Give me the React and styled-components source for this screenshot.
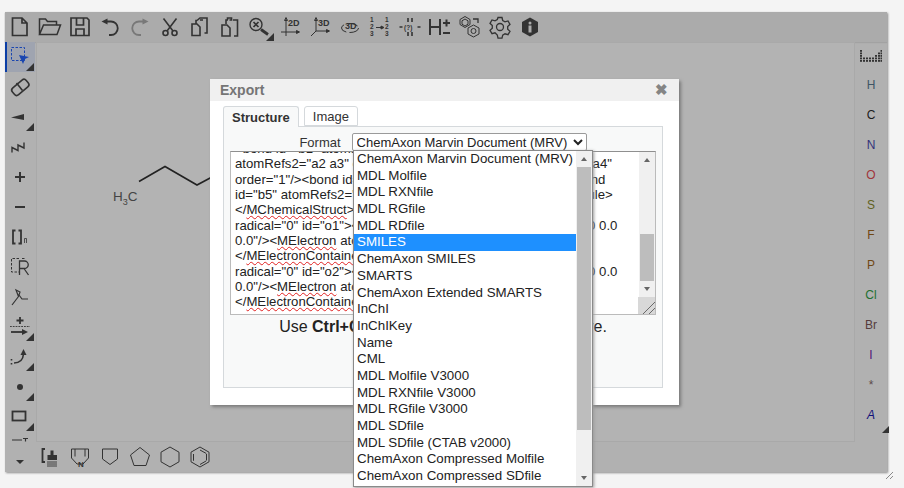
import React from 'react';
import styled, { createGlobalStyle } from 'styled-components';

const GlobalStyle = createGlobalStyle`
  html, body {
    margin: 0;
    background: #f4f4f4;
    font-family: "Liberation Sans", Arial, sans-serif;
  }
  * { box-sizing: border-box; }
`;

const Page = styled.div`
  width: 904px;
  height: 488px;
  padding: 12px 0 0 5px;
  overflow: hidden;
`;

const Editor = styled.div`
  position: relative;
  width: 882px;
  height: 460px;
  display: grid;
  grid-template-columns: 31px 1fr 32px;
  grid-template-rows: 30px 1fr 30px;
  background: #b1b1b1;
  box-shadow: 1px 1px 2px #8c8c8c;
`;

const TopBar = styled.div`
  grid-column: 1 / 4;
  display: flex;
  background: #ababab;
  box-shadow: 0 1px 1px #a2a2a2;
`;

const LeftBar = styled.div`
  display: flex;
  flex-direction: column;
  overflow: hidden;
`;

const Canvas = styled.div`
  position: relative;
  background: #b3b3b3;
  border: 1px solid #a9a9a9;
`;

const RightBar = styled.div`
  display: flex;
  flex-direction: column;
  align-items: center;
`;

const BottomBar = styled.div`
  grid-column: 1 / 4;
  display: flex;
`;

const Tool = styled.div`
  position: relative;
  flex: 0 0 30px;
  width: 30px;
  height: 30px;
  display: flex;
  align-items: center;
  justify-content: center;
  color: ${p => (p.$dim ? '#787878' : '#333')};
  background: ${p => (p.$active ? '#9fa4b0' : 'transparent')};
  box-shadow: ${p => (p.$active ? 'inset 2px 0 0 #0b3ea6' : 'none')};
  ${p => p.$corner && `
    &::after {
      content: '';
      position: absolute;
      right: 1px;
      bottom: 1px;
      border-style: solid;
      border-width: 0 0 8px 8px;
      border-color: transparent transparent #333 transparent;
    }
  `}
`;

const Atom = styled.div`
  position: relative;
  flex: 0 0 ${p => p.$height || 30}px;
  width: 30px;
  display: flex;
  align-items: center;
  justify-content: center;
  font-size: 12px;
  color: ${p => p.$color};
  font-style: ${p => (p.$italic ? 'italic' : 'normal')};
  ${p => p.$corner && `
    &::after {
      content: '';
      position: absolute;
      right: -3px;
      bottom: -3px;
      border-style: solid;
      border-width: 0 0 7px 7px;
      border-color: transparent transparent #333 transparent;
    }
  `}
`;

const ResizeGrip = styled.svg`
  position: absolute;
  right: -7px;
  bottom: -8px;
`;

const Label = styled.span`
  position: absolute;
  left: 76px;
  top: 146px;
  font-size: 13.5px;
  color: #444;
  sub { font-size: 9px; line-height: 0; }
`;

const Bonds = styled.svg`
  position: absolute;
  left: 0;
  top: 0;
`;

const Modal = styled.div`
  position: absolute;
  left: 205px;
  top: 67px;
  width: 469px;
  height: 326px;
  background: #fff;
  box-shadow: 2px 2px 3px #7a7a7a;
  display: flex;
  flex-direction: column;
  padding-bottom: 17px;
`;

const ModalHeader = styled.div`
  height: 22px;
  flex: none;
  background: #f0f0f0;
  display: flex;
  align-items: center;
  justify-content: space-between;
  padding: 0 11px 0 10px;
  font-size: 14px;
  font-weight: bold;
  color: #757575;
`;

const Close = styled.span`
  font-size: 15px;
  color: #858585;
`;

const Tabs = styled.div`
  flex: none;
  display: flex;
  gap: 5px;
  margin: 5px 0 0 13px;
  height: 20px;
`;

const Tab = styled.div`
  height: ${p => (p.$active ? '21px' : '20px')};
  position: relative;
  z-index: 1;
  padding: 0 8px;
  display: flex;
  align-items: center;
  font-size: 13px;
  color: #333;
  font-weight: ${p => (p.$active ? 'bold' : 'normal')};
  background: ${p => (p.$active ? '#f8f9f9' : '#fff')};
  border: 1px solid #d5d9dc;
  border-bottom: ${p => (p.$active ? 'none' : '1px solid #d5d9dc')};
  border-radius: 3px 3px 0 0;
`;

const TabPanel = styled.div`
  flex: 1;
  margin: 0 16px 0 13px;
  background: #f8f9f9;
  border: 1px solid #d5d9dc;
  display: flex;
  flex-direction: column;
  padding: 6px 6px 0;
`;

const FormatRow = styled.div`
  position: relative;
  z-index: 2;
  flex: none;
  display: flex;
  justify-content: center;
  align-items: center;
  gap: 11px;
  height: 18px;
  font-size: 13px;
  color: #333;
`;

const FormatSelect = styled.select`
  width: 235px;
  height: 18px;
  padding: 0;
  font: 13px "Liberation Sans", Arial, sans-serif;
  color: #222;
  background: #fff;
  border: 1px solid #9a9a9a;
  border-radius: 2px;
`;

const DropList = styled.div`
  position: absolute;
  left: 123px;
  top: 17px;
  width: 240px;
  height: 337px;
  background: #fff;
  border: 1px solid #8a8a8a;
  box-shadow: 1px 1px 3px #9a9a9a;
  display: flex;
`;

const Options = styled.ul`
  flex: 1;
  list-style: none;
  margin: 0;
  padding: 0;
  overflow: hidden;
`;

const Option = styled.li`
  height: 16.7px;
  padding: 0 3px;
  font-size: 13.33px;
  line-height: 16.7px;
  white-space: nowrap;
  color: ${p => (p.$selected ? '#fff' : '#222')};
  background: ${p => (p.$selected ? '#1e90ff' : 'transparent')};
`;

const ScrollBar = styled.div`
  flex: 0 0 16px;
  display: flex;
  flex-direction: column;
  align-items: center;
  background: #f0f0f0;
  margin-bottom: ${p => p.$inset || 0}px;
`;

const ScrollButton = styled.div`
  flex: 0 0 ${p => p.$size}px;
  width: 100%;
  display: flex;
  align-items: center;
  justify-content: center;
  &::before {
    content: '';
    border-style: solid;
    border-width: ${p => (p.$down ? '4px 3.5px 0' : '0 3.5px 4px')};
    border-color: ${p => (p.$down ? '#666 transparent transparent' : 'transparent transparent #666')};
  }
`;

const ScrollThumb = styled.div`
  flex: 0 0 ${p => p.$size}px;
  width: 14px;
  background: #bdbdbd;
`;

const ScrollSpace = styled.div`
  flex: 1 1 ${p => p.$size}px;
`;

const TextBox = styled.div`
  position: relative;
  flex: none;
  height: 164px;
  background: #fff;
  border: 1px solid #bbb;
  border-top-color: #8f8f8f;
  display: flex;
`;

const TextLines = styled.div`
  flex: 1;
  overflow: hidden;
  padding: 0 0 0 4px;
  font-size: 13.2px;
  line-height: 15.33px;
  color: #222;
  white-space: pre;
`;

const TextLine = styled.div`
  height: 15.33px;
  &:first-child { margin-top: -11px; }
`;

const Squiggle = styled.span`
  text-decoration: underline wavy #e02020 1px;
  text-underline-offset: 1px;
`;

const ResizeCorner = styled.div`
  position: absolute;
  right: 0;
  bottom: 0;
  width: 17px;
  height: 17px;
  background: linear-gradient(135deg, #d8d8d8 62%, #6a6a6a 62%, #6a6a6a 67%, #d8d8d8 67%, #d8d8d8 80%, #6a6a6a 80%, #6a6a6a 85%, #d8d8d8 85%);
`;

const CopyHint = styled.div`
  flex: none;
  margin-top: 3px;
  text-align: center;
  font-size: 16px;
  color: #222;
  white-space: nowrap;
`;

const ic = { width: 24, height: 24, viewBox: '0 0 24 24', fill: 'none', stroke: 'currentColor' };

const NewIcon = () => <svg {...ic} strokeWidth="1.7"><path d="M4.5 3h9.5l5 5v12.5h-14.5z M14 3v5h5" /></svg>;
const OpenIcon = () => <svg {...ic} strokeWidth="1.5"><path d="M1.5 19.5V4h6l2 2.5h9V10 M1.5 19.5l4-9.5h17l-3.5 9.5z" /></svg>;
const SaveIcon = () => <svg {...ic} strokeWidth="1.7"><path d="M3 3h16l2 2v15.500H3z M8.500 3.500v6.500h7v-6.500 M8 20v-6h8v6" /></svg>;
const UndoIcon = () => <svg {...ic} strokeWidth="1.8"><path d="M9 6.500h4a6.500 6.500 0 0 1 0 13.500h-2" /><path d="M3.500 6.500l6-3v6z" fill="currentColor" stroke="none" /></svg>;
const RedoIcon = () => <svg {...ic} strokeWidth="1.8"><path d="M15 6.500h-4a6.500 6.500 0 0 0 0 13.500h2" /><path d="M20.500 6.500l-6-3v6z" fill="currentColor" stroke="none" /></svg>;
const CutIcon = () => <svg {...ic} strokeWidth="1.6"><circle cx="7.500" cy="18" r="2.500" /><circle cx="16.500" cy="18" r="2.500" /><path d="M9 16L18.500 3.500 M15 16L5.500 3.500" /></svg>;
const CopyIcon = () => <svg {...ic} strokeWidth="1.6"><path d="M4 9h5l3 3v8.500H4z M8 9V5.500h1 M12 5h3 M15.500 3H19v15h-2.500 M9 5.500L12 3h3.500" /></svg>;
const PasteIcon = () => <svg {...ic} strokeWidth="1.6"><path d="M4 10h5l3 3v8H4z M8 9V5h2 M9.500 5V3h4v2h-2 M15 5h4.500v16H16" /></svg>;
const CleanIcon = () => (
  <svg width="26" height="26" viewBox="0 0 26 26" fill="none" stroke="currentColor" strokeWidth="1.4">
    <circle cx="9" cy="10.500" r="6" />
    <path d="M6.500 8l5 5 M11.500 8l-5 5" strokeWidth="1.700" />
    <path d="M14 15.500l7 5" strokeWidth="2.800" />
  </svg>
);

const AxisText = styled.text`
  font: bold 9px "Liberation Sans", Arial, sans-serif;
  fill: currentColor;
  stroke: none;
`;

const SmallNum = styled.text`
  font: bold 6.5px "Liberation Sans", Arial, sans-serif;
  fill: currentColor;
  stroke: none;
`;

const Clean2dIcon = () => (
  <svg {...ic} strokeWidth="1"><path d="M8 4v17 M3 17h18 M8 2.500l-1.500 3h3z" /><path d="M21.500 17l-3-1.500v3z" fill="currentColor" /><AxisText x="10" y="11">2D</AxisText></svg>
);
const Clean3dIcon = () => (
  <svg {...ic} strokeWidth="1"><path d="M8 4v12 M8 16h13 M8 16l-5 5 M8 2.500l-1.500 3h3z" /><path d="M21.500 16l-3-1.500v3z" fill="currentColor" /><AxisText x="10" y="11">3D</AxisText></svg>
);
const Rotate3dIcon = () => (
  <svg {...ic} strokeWidth="1"><ellipse cx="12" cy="13" rx="8.500" ry="4.500" strokeDasharray="11 3" /><AxisText x="7" y="14">3D</AxisText></svg>
);
const NumberIcon = () => (
  <svg {...ic} strokeWidth="1">
    <SmallNum x="2" y="7">1</SmallNum><SmallNum x="2" y="14">2</SmallNum><SmallNum x="2" y="21">3</SmallNum>
    <SmallNum x="17" y="7">1</SmallNum><SmallNum x="17" y="14">2</SmallNum><SmallNum x="17" y="21">3</SmallNum>
    <path d="M8 12.500h7" /><path d="M16 12.500l-3-1.500v3z" fill="currentColor" />
  </svg>
);
const QueryIcon = () => (
  <svg {...ic} strokeWidth="1.600">
    <path d="M10 3v4 M14 3v4 M10 17v4 M14 17v4 M1.500 12h3 M19.500 12h3" />
    <SmallNum x="6" y="14.500">(?)</SmallNum>
  </svg>
);
const HydrogenIcon = () => (
  <svg {...ic} strokeWidth="2">
    <path d="M2 4v16 M12 4v16 M2 12h10" />
    <path d="M15 8h7 M18.500 4.500v7 M15 18h7" />
  </svg>
);
const RingsIcon = () => (
  <svg {...ic} strokeWidth="1">
    <path d="M7 1.500l5 3v5l-5 3-5-3v-5z M7 4l3 1.800v3.400l-3 1.800-3-1.800V5.800z" />
    <path d="M15.500 10l5.500 3v6l-5.500 3-5.500-3v-6z" />
    <circle cx="15.500" cy="16" r="2.500" />
    <path d="M15 4h5v4" strokeWidth="1.300" />
  </svg>
);
const GearIcon = () => (
  <svg {...ic} strokeWidth="1.300">
    <circle cx="12" cy="12" r="3.500" />
    <path d="M10 2.500h4l.7 3 2.300 1.300 3-.9 2 3.400-2.300 2.200v2.600l2.300 2.200-2 3.400-3-.9-2.300 1.300-.7 3h-4l-.7-3L7 17.800l-3 .9-2-3.400 2.300-2.200v-2.600L2 8.300l2-3.400 3 .9 2.300-1.300z" />
  </svg>
);
const InfoIcon = () => (
  <svg {...ic} stroke="none">
    <path d="M12 2.500l8 4.500v10l-8 4.500-8-4.500V7z" fill="currentColor" />
    <circle cx="12" cy="8" r="1.500" fill="#ababab" />
    <path d="M10.500 10.500h3v7h-3z" fill="#ababab" />
  </svg>
);

const SelectIcon = () => (
  <svg {...ic} strokeWidth="1">
    <rect x="3.500" y="2.500" width="13" height="13" stroke="#1a46b0" strokeDasharray="2.500 1.500" />
    <path d="M11 10l10 2-4 2-2 5z" fill="#1a46b0" stroke="none" />
  </svg>
);
const EraserIcon = () => (
  <svg {...ic} strokeWidth="1.600">
    <rect x="3" y="8" width="18" height="9" rx="3" transform="rotate(-40 12 12)" />
    <path d="M8.500 8l6 7.500" />
  </svg>
);
const WedgeIcon = () => <svg {...ic} stroke="none"><path d="M3 12.500l13-3.500v6z" fill="currentColor" /></svg>;
const ChainIcon = () => <svg {...ic} strokeWidth="1.400"><path d="M4 17.500V12.500l6 3V10l6 3V7.500" /></svg>;
const PlusIcon = () => <svg {...ic} strokeWidth="2"><path d="M12 7v10 M7 12h10" /></svg>;
const MinusIcon = () => <svg {...ic} strokeWidth="2"><path d="M7 12h10" /></svg>;
const BracketIcon = () => (
  <svg {...ic} strokeWidth="1.800">
    <path d="M7.500 5.500H5v13h2.500 M10.500 5.500H13v13h-2.500" />
    <path d="M16.500 18v-4.500h2V18" strokeWidth="0.800" />
  </svg>
);
const RgroupIcon = () => (
  <svg {...ic} strokeWidth="1">
    <path d="M11 3.500H3.500V17H11 M14 3.500h3.500" strokeDasharray="2.500 1.500" />
    <path d="M11.500 20V6h5a3.500 3.500 0 0 1 0 7.500h-5 M16 13.500l4.500 6.500" strokeWidth="1.300" />
  </svg>
);
const SgroupIcon = () => (
  <svg {...ic} strokeWidth="1.200"><path d="M4 20L10.500 11.500 8 5l2 1 2 1-1 3 3 4h6" /></svg>
);
const ReactionIcon = () => (
  <svg {...ic} strokeWidth="1.800">
    <path d="M12 2v7 M8.500 5.500h7" />
    <path d="M2 11.500h20" strokeWidth="0.900" strokeDasharray="1.800 1" />
    <path d="M3 17h13" /><path d="M20 17l-6-3v6z" fill="currentColor" stroke="none" />
  </svg>
);
const MechanismIcon = () => (
  <svg {...ic} strokeWidth="1.600">
    <path d="M6 18c6 0 9-3 9.500-9" />
    <path d="M15.500 4l-3 6h6z" fill="currentColor" stroke="none" />
    <path d="M3.500 14v1.500 M3.500 18v1.500" />
  </svg>
);
const DotIcon = () => <svg {...ic} stroke="none"><circle cx="12" cy="12" r="3" fill="currentColor" /></svg>;
const RectIcon = () => <svg {...ic} strokeWidth="1.800"><rect x="4.500" y="6.500" width="13" height="9" /></svg>;
const TextLineIcon = () => <svg {...ic} strokeWidth="1.200"><path d="M4 5h10 M15 3.500h5 M17.500 3.500v3" /></svg>;

const CaretIcon = () => <svg {...ic} stroke="none"><path d="M8 15h8l-4 4z" fill="currentColor" /></svg>;
const TemplateIcon = () => (
  <svg {...ic} strokeWidth="1.600">
    <path d="M7 4H4.500v13H7" strokeWidth="1.800" />
    <path d="M9.500 15v-5h3V5.500h3V10H19v5z" fill="currentColor" stroke="none" />
    <path d="M9 17h10 M9 19h10 M9 21h10" strokeWidth="0.900" />
  </svg>
);
const NRingIcon = () => (
  <svg {...ic} strokeWidth="1">
    <path d="M3.500 4h17v9L15 19H9l-5.500-6z M7 4v7.500 M17 4v7.500" />
    <SmallNum x="10" y="22" style={{ fontSize: 8 }}>N</SmallNum>
  </svg>
);
const SquareRingIcon = () => <svg {...ic} strokeWidth="1"><path d="M4.500 4h15v10L12 19.500 4.500 14z" /></svg>;
const PentagonIcon = () => <svg {...ic} strokeWidth="1"><path d="M12 2.500L21.500 10 18 20.500H6L2.500 10z" /></svg>;
const HexagonIcon = () => <svg {...ic} strokeWidth="1"><path d="M12 2l9 5.200v9.600L12 22l-9-5.200V7.200z" /></svg>;
const BenzeneIcon = () => (
  <svg {...ic} strokeWidth="1">
    <path d="M12 2l9 5.200v9.600L12 22l-9-5.200V7.200z" />
    <path d="M12 5l6.300 3.500 M18.500 9v6.500 M18 16l-6 3.500 M6 16l-.5-.5V9" />
  </svg>
);

const periodicColumns = [
  [0, 5], [3, 2], [6, 2], [9, 2], [12, 2], [15, 3], [18, 4], [20.500, 5],
];

const PeriodicIcon = () => (
  <svg width="22" height="12" viewBox="0 0 22 12" fill="#333">
    {periodicColumns.flatMap(([x, count]) =>
      Array.from({ length: count }, (_, i) => (
        <rect key={`${x}-${i}`} x={x} y={10 - i * 2.500} width="2" height="1.800" />
      ))
    )}
  </svg>
);

const topTools = [
  { Icon: NewIcon }, { Icon: OpenIcon }, { Icon: SaveIcon }, { Icon: UndoIcon },
  { Icon: RedoIcon, dim: true }, { Icon: CutIcon }, { Icon: CopyIcon }, { Icon: PasteIcon },
  { Icon: CleanIcon, corner: true }, { Icon: Clean2dIcon }, { Icon: Clean3dIcon }, { Icon: Rotate3dIcon },
  { Icon: NumberIcon }, { Icon: QueryIcon }, { Icon: HydrogenIcon }, { Icon: RingsIcon },
  { Icon: GearIcon }, { Icon: InfoIcon },
];

const leftTools = [
  { Icon: SelectIcon, active: true, corner: true }, { Icon: EraserIcon },
  { Icon: WedgeIcon, corner: true }, { Icon: ChainIcon }, { Icon: PlusIcon }, { Icon: MinusIcon },
  { Icon: BracketIcon }, { Icon: RgroupIcon }, { Icon: SgroupIcon },
  { Icon: ReactionIcon, corner: true }, { Icon: MechanismIcon, corner: true },
  { Icon: DotIcon, corner: true }, { Icon: RectIcon, corner: true }, { Icon: TextLineIcon },
];

const bottomTools = [CaretIcon, TemplateIcon, NRingIcon, SquareRingIcon, PentagonIcon, HexagonIcon, BenzeneIcon];

const atoms = [
  ['H', '#3f5566'], ['C', '#1c1c1c'], ['N', '#33337a'], ['O', '#a0343a'], ['S', '#62621e'],
  ['F', '#704814'], ['P', '#704814'], ['Cl', '#1e7030'], ['Br', '#553c3c'], ['I', '#50107a'], ['*', '#5c4a4a'],
];

const formats = [
  'ChemAxon Marvin Document (MRV)', 'MDL Molfile', 'MDL RXNfile', 'MDL RGfile', 'MDL RDfile', 'SMILES',
  'ChemAxon SMILES', 'SMARTS', 'ChemAxon Extended SMARTS', 'InChI', 'InChIKey', 'Name', 'CML',
  'MDL Molfile V3000', 'MDL RXNfile V3000', 'MDL RGfile V3000', 'MDL SDfile', 'MDL SDfile (CTAB v2000)',
  'ChemAxon Compressed Molfile', 'ChemAxon Compressed SDfile',
];

const Scroll = ({ before, thumb, after, inset }) => (
  <ScrollBar $inset={inset}>
    <ScrollButton $size={16} />
    <ScrollSpace $size={before} />
    <ScrollThumb $size={thumb} />
    <ScrollSpace $size={after} />
    <ScrollButton $size={16} $down />
  </ScrollBar>
);

const App = () => (
  <Page>
    <GlobalStyle />
    <Editor>
      <TopBar>
        {topTools.map(({ Icon, dim, corner }, i) => (
          <Tool key={i} $dim={dim} $corner={corner}><Icon /></Tool>
        ))}
      </TopBar>
      <LeftBar>
        {leftTools.map(({ Icon, active, corner }, i) => (
          <Tool key={i} $active={active} $corner={corner}><Icon /></Tool>
        ))}
      </LeftBar>
      <Canvas>
        <Bonds width="180" height="180" fill="none" stroke="#222" strokeWidth="1.600">
          <path d="M102 138.500L128 123.500 160 142 175 134" />
        </Bonds>
        <Label>H<sub>3</sub>C</Label>
      </Canvas>
      <RightBar>
        <Atom $height={28}><PeriodicIcon /></Atom>
        {atoms.map(([name, color]) => (
          <Atom key={name} $color={color}>{name}</Atom>
        ))}
        <Atom $color="#10107a" $italic $corner>A</Atom>
      </RightBar>
      <BottomBar>
        {bottomTools.map((Icon, i) => <Tool key={i}><Icon /></Tool>)}
      </BottomBar>
      <ResizeGrip width="9" height="9" viewBox="0 0 9 9" stroke="#8a8a8a">
        <path d="M1 8L8 1 M5 8L8 5" />
      </ResizeGrip>

      <Modal>
        <ModalHeader>Export<Close>✖</Close></ModalHeader>
        <Tabs>
          <Tab $active>Structure</Tab>
          <Tab>Image</Tab>
        </Tabs>
        <TabPanel>
          <FormatRow>
            Format
            <FormatSelect defaultValue="mrv">
              <option value="mrv">ChemAxon Marvin Document (MRV)</option>
            </FormatSelect>
            <DropList>
              <Options>
                {formats.map(name => (
                  <Option key={name} $selected={name === 'SMILES'}>{name}</Option>
                ))}
              </Options>
              <Scroll before={0} thumb={263} after={40} />
            </DropList>
          </FormatRow>
          <TextBox>
            <TextLines>
              <TextLine>{'<bond id="b1" atomRefs2="a1 a2" order="1"/><bond id="b2"'}</TextLine>
              <TextLine>{'atomRefs2="a2 a3" order="1"/><bond id="3" atomRefs2="a3 a4"'}</TextLine>
              <TextLine>{'order="1"/><bond id="b4" atomRefs2="a4a5" order="1"/><bond'}</TextLine>
              <TextLine>{'id="b5" atomRefs2="a5a6" order="1"/></bondArray></molecule>'}</TextLine>
              <TextLine>{'</'}<Squiggle>MChemicalStruct</Squiggle>{'>'}</TextLine>
              <TextLine>{'radical="0" id="o1"><MElectron atomRefs="m1.a1" x="0.0 0.0 0.0'}</TextLine>
              <TextLine>{'0.0"/><'}<Squiggle>MElectron</Squiggle>{' atomRefs="m1.a1"'}</TextLine>
              <TextLine>{'</'}<Squiggle>MElectronContainer</Squiggle>{'>'}</TextLine>
              <TextLine>{'radical="0" id="o2"><MElectron atomRefs="m1.a6" x="0.0 0.0 0.0'}</TextLine>
              <TextLine>{'0.0"/><'}<Squiggle>MElectron</Squiggle>{' atomRefs="m1.a6"'}</TextLine>
              <TextLine>{'</'}<Squiggle>MElectronContainer</Squiggle>{'>'}</TextLine>
            </TextLines>
            <Scroll before={65} thumb={47} after={0} inset={17} />
            <ResizeCorner />
          </TextBox>
          <CopyHint>Use <b>Ctrl+C</b> to copy the file contents and save.</CopyHint>
        </TabPanel>
      </Modal>
    </Editor>
  </Page>
);

export default App;
